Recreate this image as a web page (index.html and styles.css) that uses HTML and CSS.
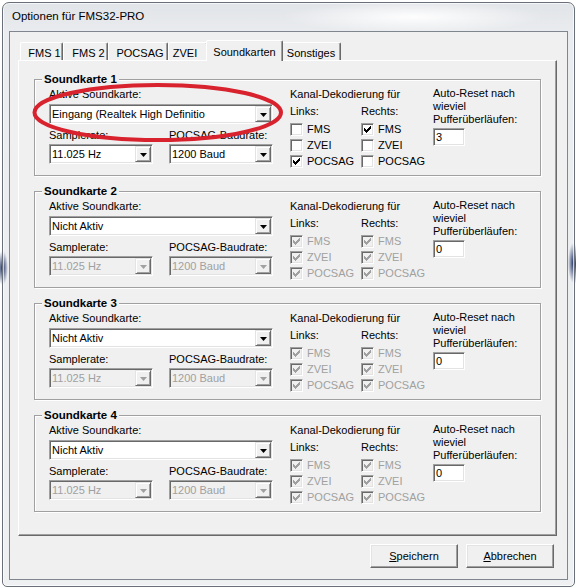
FILE: index.html
```html
<!DOCTYPE html>
<html lang="de">
<head>
<meta charset="utf-8">
<title>Optionen für FMS32-PRO</title>
<link rel="stylesheet" href="styles.css">
</head>
<body>
<div class="window">
  <div class="titlebar">Optionen für FMS32-PRO</div>
  <div class="client">
    <div class="tabs">
      <div class="tab t1">FMS 1</div>
      <div class="tab t2">FMS 2</div>
      <div class="tab t3">POCSAG</div>
      <div class="tab t4">ZVEI</div>
      <div class="tab t5 active">Soundkarten</div>
      <div class="tab t6">Sonstiges</div>
    </div>
    <div class="panel">

      <section class="group">
        <div class="group-title">Soundkarte 1</div>
        <div class="group-body">
          <div class="col">
            <div class="label">Aktive Soundkarte:</div>
            <div class="combo wide"><span class="combo-text">Eingang (Realtek High Definitio</span><span class="combo-btn"><svg viewBox="0 0 7 4"><polygon points="0,0 7,0 3.5,4"/></svg></span></div>
            <div class="pair">
              <div class="field">
                <div class="label">Samplerate:</div>
                <div class="combo"><span class="combo-text">11.025 Hz</span><span class="combo-btn"><svg viewBox="0 0 7 4"><polygon points="0,0 7,0 3.5,4"/></svg></span></div>
              </div>
              <div class="field">
                <div class="label">POCSAG-Baudrate:</div>
                <div class="combo"><span class="combo-text">1200 Baud</span><span class="combo-btn"><svg viewBox="0 0 7 4"><polygon points="0,0 7,0 3.5,4"/></svg></span></div>
              </div>
            </div>
          </div>
          <div class="col">
            <div class="label">Kanal-Dekodierung für</div>
            <div class="checks">
              <div class="label">Links:</div>
              <div class="label">Rechts:</div>
              <div class="check"><span class="cb"></span>FMS</div>
              <div class="check"><span class="cb"><svg viewBox="0 0 7 7"><path d="M0 2H1V3H2V4H3V3H4V2H5V1H6V0H7V3H6V4H5V5H4V6H3V7H2V6H1V5H0Z"/></svg></span>FMS</div>
              <div class="check"><span class="cb"></span>ZVEI</div>
              <div class="check"><span class="cb"></span>ZVEI</div>
              <div class="check"><span class="cb"><svg viewBox="0 0 7 7"><path d="M0 2H1V3H2V4H3V3H4V2H5V1H6V0H7V3H6V4H5V5H4V6H3V7H2V6H1V5H0Z"/></svg></span>POCSAG</div>
              <div class="check"><span class="cb"></span>POCSAG</div>
            </div>
          </div>
          <div class="col">
            <div class="label multi">Auto-Reset nach<br>wieviel<br>Pufferüberläufen:</div>
            <div class="edit">3</div>
          </div>
        </div>
      </section>

      <section class="group">
        <div class="group-title">Soundkarte 2</div>
        <div class="group-body">
          <div class="col">
            <div class="label">Aktive Soundkarte:</div>
            <div class="combo wide"><span class="combo-text">Nicht Aktiv</span><span class="combo-btn"><svg viewBox="0 0 7 4"><polygon points="0,0 7,0 3.5,4"/></svg></span></div>
            <div class="pair">
              <div class="field">
                <div class="label">Samplerate:</div>
                <div class="combo disabled"><span class="combo-text">11.025 Hz</span><span class="combo-btn"><svg viewBox="0 0 7 4"><polygon points="0,0 7,0 3.5,4"/></svg></span></div>
              </div>
              <div class="field">
                <div class="label">POCSAG-Baudrate:</div>
                <div class="combo disabled"><span class="combo-text">1200 Baud</span><span class="combo-btn"><svg viewBox="0 0 7 4"><polygon points="0,0 7,0 3.5,4"/></svg></span></div>
              </div>
            </div>
          </div>
          <div class="col">
            <div class="label">Kanal-Dekodierung für</div>
            <div class="checks">
              <div class="label">Links:</div>
              <div class="label">Rechts:</div>
              <div class="check off"><span class="cb"><svg viewBox="0 0 7 7"><path d="M0 2H1V3H2V4H3V3H4V2H5V1H6V0H7V3H6V4H5V5H4V6H3V7H2V6H1V5H0Z"/></svg></span>FMS</div>
              <div class="check off"><span class="cb"><svg viewBox="0 0 7 7"><path d="M0 2H1V3H2V4H3V3H4V2H5V1H6V0H7V3H6V4H5V5H4V6H3V7H2V6H1V5H0Z"/></svg></span>FMS</div>
              <div class="check off"><span class="cb"><svg viewBox="0 0 7 7"><path d="M0 2H1V3H2V4H3V3H4V2H5V1H6V0H7V3H6V4H5V5H4V6H3V7H2V6H1V5H0Z"/></svg></span>ZVEI</div>
              <div class="check off"><span class="cb"><svg viewBox="0 0 7 7"><path d="M0 2H1V3H2V4H3V3H4V2H5V1H6V0H7V3H6V4H5V5H4V6H3V7H2V6H1V5H0Z"/></svg></span>ZVEI</div>
              <div class="check off"><span class="cb"><svg viewBox="0 0 7 7"><path d="M0 2H1V3H2V4H3V3H4V2H5V1H6V0H7V3H6V4H5V5H4V6H3V7H2V6H1V5H0Z"/></svg></span>POCSAG</div>
              <div class="check off"><span class="cb"><svg viewBox="0 0 7 7"><path d="M0 2H1V3H2V4H3V3H4V2H5V1H6V0H7V3H6V4H5V5H4V6H3V7H2V6H1V5H0Z"/></svg></span>POCSAG</div>
            </div>
          </div>
          <div class="col">
            <div class="label multi">Auto-Reset nach<br>wieviel<br>Pufferüberläufen:</div>
            <div class="edit">0</div>
          </div>
        </div>
      </section>

      <section class="group">
        <div class="group-title">Soundkarte 3</div>
        <div class="group-body">
          <div class="col">
            <div class="label">Aktive Soundkarte:</div>
            <div class="combo wide"><span class="combo-text">Nicht Aktiv</span><span class="combo-btn"><svg viewBox="0 0 7 4"><polygon points="0,0 7,0 3.5,4"/></svg></span></div>
            <div class="pair">
              <div class="field">
                <div class="label">Samplerate:</div>
                <div class="combo disabled"><span class="combo-text">11.025 Hz</span><span class="combo-btn"><svg viewBox="0 0 7 4"><polygon points="0,0 7,0 3.5,4"/></svg></span></div>
              </div>
              <div class="field">
                <div class="label">POCSAG-Baudrate:</div>
                <div class="combo disabled"><span class="combo-text">1200 Baud</span><span class="combo-btn"><svg viewBox="0 0 7 4"><polygon points="0,0 7,0 3.5,4"/></svg></span></div>
              </div>
            </div>
          </div>
          <div class="col">
            <div class="label">Kanal-Dekodierung für</div>
            <div class="checks">
              <div class="label">Links:</div>
              <div class="label">Rechts:</div>
              <div class="check off"><span class="cb"><svg viewBox="0 0 7 7"><path d="M0 2H1V3H2V4H3V3H4V2H5V1H6V0H7V3H6V4H5V5H4V6H3V7H2V6H1V5H0Z"/></svg></span>FMS</div>
              <div class="check off"><span class="cb"><svg viewBox="0 0 7 7"><path d="M0 2H1V3H2V4H3V3H4V2H5V1H6V0H7V3H6V4H5V5H4V6H3V7H2V6H1V5H0Z"/></svg></span>FMS</div>
              <div class="check off"><span class="cb"><svg viewBox="0 0 7 7"><path d="M0 2H1V3H2V4H3V3H4V2H5V1H6V0H7V3H6V4H5V5H4V6H3V7H2V6H1V5H0Z"/></svg></span>ZVEI</div>
              <div class="check off"><span class="cb"><svg viewBox="0 0 7 7"><path d="M0 2H1V3H2V4H3V3H4V2H5V1H6V0H7V3H6V4H5V5H4V6H3V7H2V6H1V5H0Z"/></svg></span>ZVEI</div>
              <div class="check off"><span class="cb"><svg viewBox="0 0 7 7"><path d="M0 2H1V3H2V4H3V3H4V2H5V1H6V0H7V3H6V4H5V5H4V6H3V7H2V6H1V5H0Z"/></svg></span>POCSAG</div>
              <div class="check off"><span class="cb"><svg viewBox="0 0 7 7"><path d="M0 2H1V3H2V4H3V3H4V2H5V1H6V0H7V3H6V4H5V5H4V6H3V7H2V6H1V5H0Z"/></svg></span>POCSAG</div>
            </div>
          </div>
          <div class="col">
            <div class="label multi">Auto-Reset nach<br>wieviel<br>Pufferüberläufen:</div>
            <div class="edit">0</div>
          </div>
        </div>
      </section>

      <section class="group">
        <div class="group-title">Soundkarte 4</div>
        <div class="group-body">
          <div class="col">
            <div class="label">Aktive Soundkarte:</div>
            <div class="combo wide"><span class="combo-text">Nicht Aktiv</span><span class="combo-btn"><svg viewBox="0 0 7 4"><polygon points="0,0 7,0 3.5,4"/></svg></span></div>
            <div class="pair">
              <div class="field">
                <div class="label">Samplerate:</div>
                <div class="combo disabled"><span class="combo-text">11.025 Hz</span><span class="combo-btn"><svg viewBox="0 0 7 4"><polygon points="0,0 7,0 3.5,4"/></svg></span></div>
              </div>
              <div class="field">
                <div class="label">POCSAG-Baudrate:</div>
                <div class="combo disabled"><span class="combo-text">1200 Baud</span><span class="combo-btn"><svg viewBox="0 0 7 4"><polygon points="0,0 7,0 3.5,4"/></svg></span></div>
              </div>
            </div>
          </div>
          <div class="col">
            <div class="label">Kanal-Dekodierung für</div>
            <div class="checks">
              <div class="label">Links:</div>
              <div class="label">Rechts:</div>
              <div class="check off"><span class="cb"><svg viewBox="0 0 7 7"><path d="M0 2H1V3H2V4H3V3H4V2H5V1H6V0H7V3H6V4H5V5H4V6H3V7H2V6H1V5H0Z"/></svg></span>FMS</div>
              <div class="check off"><span class="cb"><svg viewBox="0 0 7 7"><path d="M0 2H1V3H2V4H3V3H4V2H5V1H6V0H7V3H6V4H5V5H4V6H3V7H2V6H1V5H0Z"/></svg></span>FMS</div>
              <div class="check off"><span class="cb"><svg viewBox="0 0 7 7"><path d="M0 2H1V3H2V4H3V3H4V2H5V1H6V0H7V3H6V4H5V5H4V6H3V7H2V6H1V5H0Z"/></svg></span>ZVEI</div>
              <div class="check off"><span class="cb"><svg viewBox="0 0 7 7"><path d="M0 2H1V3H2V4H3V3H4V2H5V1H6V0H7V3H6V4H5V5H4V6H3V7H2V6H1V5H0Z"/></svg></span>ZVEI</div>
              <div class="check off"><span class="cb"><svg viewBox="0 0 7 7"><path d="M0 2H1V3H2V4H3V3H4V2H5V1H6V0H7V3H6V4H5V5H4V6H3V7H2V6H1V5H0Z"/></svg></span>POCSAG</div>
              <div class="check off"><span class="cb"><svg viewBox="0 0 7 7"><path d="M0 2H1V3H2V4H3V3H4V2H5V1H6V0H7V3H6V4H5V5H4V6H3V7H2V6H1V5H0Z"/></svg></span>POCSAG</div>
            </div>
          </div>
          <div class="col">
            <div class="label multi">Auto-Reset nach<br>wieviel<br>Pufferüberläufen:</div>
            <div class="edit">0</div>
          </div>
        </div>
      </section>

    </div>
    <div class="actions">
      <div class="btn"><span><u>S</u>peichern</span></div>
      <div class="btn"><span><u>A</u>bbrechen</span></div>
    </div>
  </div>
</div>
<svg class="markup" width="576" height="588" viewBox="0 0 576 588">
  <ellipse cx="157.75" cy="112.5" rx="123.25" ry="27.5"/>
</svg>
</body>
</html>
```

FILE: styles.css
```css
* {
  box-sizing: border-box;
}

html,
body {
  margin: 0;
}

body {
  position: relative;
  width: 576px;
  height: 588px;
  overflow: hidden;
  background:
    radial-gradient(ellipse 5px 17px at 2px 268px, rgba(30, 48, 100, 0.95), rgba(30, 48, 100, 0)),
    radial-gradient(ellipse 5px 20px at 575px 264px, rgba(30, 48, 100, 0.95), rgba(30, 48, 100, 0)),
    #ffffff;
  font-family: "Liberation Sans", Arial, sans-serif;
  font-size: 11px;
  color: #000;
}

/* ---- window frame ---- */
.window {
  display: flex;
  flex-direction: column;
  width: 573px;
  height: 585px;
  margin: 2px 0 0 2px;
  padding: 0 6px 6px 6px;
  border: 1px solid #6a7079;
  border-radius: 7px 7px 5px 5px;
  background:
    radial-gradient(ellipse 5px 17px at 0px 265px, rgba(30, 48, 100, 0.95), rgba(30, 48, 100, 0)),
    radial-gradient(ellipse 5px 20px at 570px 260px, rgba(30, 48, 100, 0.95), rgba(30, 48, 100, 0)),
    radial-gradient(ellipse 130px 16px at 410px 14px, rgba(255, 255, 255, 0.95), rgba(255, 255, 255, 0)),
    linear-gradient(#e1e4e8, #eaecef 30px, #eef0f2);
  box-shadow: inset 0 0 0 1px rgba(255, 255, 255, 0.7);
}

.titlebar {
  height: 28px;
  padding: 0 0 1px 3px;
  line-height: 27px;
  font-size: 11.5px;
  color: #000;
}

.client {
  width: 559px;
  height: 549px;
  padding: 8px 10px 0 8px;
  border: 1px solid #7f868e;
  background: #f0f0f0;
}

/* ---- tab strip ---- */
.tabs {
  position: relative;
  z-index: 2;
  display: flex;
  align-items: flex-end;
  height: 20px;
  padding-left: 2px;
}

.tab {
  height: 18px;
  padding-top: 3px;
  line-height: 14px;
  text-align: center;
  white-space: nowrap;
  background: #f0f0f0;
  border: 1px solid #ffffff;
  border-bottom: 0;
  border-right-color: #696969;
  border-radius: 2px 2px 0 0;
  box-shadow: inset -1px 0 #a0a0a0;
}

.t1 { width: 43px; padding-left: 6px; }
.t2 { width: 45px; padding-left: 6px; }
.t3 { width: 60px; padding-left: 4px; }
.t4 { width: 40px; padding-right: 6px; }
.t5 { width: 77px; }
.t6 { width: 60px; }

.tab.active {
  position: relative;
  z-index: 3;
  height: 21px;
  margin: 0 -2px -1px;
  padding-top: 4px;
}

/* ---- tab page ---- */
.panel {
  width: 539px;
  height: 476px;
  padding: 18px 0 0 15px;
  border: 1px solid;
  border-color: #ffffff #696969 #696969 #ffffff;
  box-shadow: inset -1px -1px #a0a0a0;
}

.group {
  width: 507px;
  height: 97px;
  margin-bottom: 15px;
  border: 1px solid #a0a0a0;
  box-shadow: inset 1px 1px #ffffff, 1px 1px #ffffff;
}

.group-title {
  width: max-content;
  margin: -8px 0 0 7px;
  padding: 0 2px;
  background: #f0f0f0;
  font-size: 11.5px;
  font-weight: bold;
  line-height: 14px;
}

.group-body {
  display: grid;
  grid-template-columns: 224px 126px 1fr;
  column-gap: 17px;
  padding: 1px 0 0 14px;
}

.label {
  line-height: 14px;
  white-space: nowrap;
}

.label.multi {
  line-height: 13px;
}

/* ---- combo boxes ---- */
.combo {
  display: flex;
  height: 20px;
  border: 1px solid;
  border-color: #a0a0a0 #ffffff #ffffff #a0a0a0;
  box-shadow: inset 1px 1px #696969, inset -1px -1px #e3e3e3;
  background: #ffffff;
}

.col > .combo.wide {
  margin-top: 3px;
}

.combo-text {
  flex: 1;
  padding-left: 2px;
  line-height: 18px;
  white-space: nowrap;
  overflow: hidden;
}

.combo-btn {
  display: flex;
  align-items: center;
  justify-content: center;
  width: 16px;
  height: 16px;
  margin: 1px 1px 0 0;
  border: 1px solid;
  border-color: #e3e3e3 #696969 #696969 #e3e3e3;
  box-shadow: inset 1px 1px #ffffff, inset -1px -1px #a0a0a0;
  background: #f0f0f0;
}

.combo-btn svg {
  display: block;
  width: 7px;
  height: 4px;
  margin-top: 1px;
  fill: #000;
}

.combo.disabled {
  background: #f0f0f0;
  color: #a0a0a0;
}

.combo.disabled .combo-btn svg {
  fill: #a0a0a0;
}

.pair {
  display: grid;
  grid-template-columns: 104px 104px;
  column-gap: 16px;
  margin-top: 4px;
}

.field .combo {
  margin-top: 2px;
}

/* ---- check boxes ---- */
.checks {
  display: grid;
  grid-template-columns: 71px auto;
  grid-template-rows: 19px repeat(3, 16px);
  margin-top: 3px;
}

.check {
  display: flex;
  align-items: flex-start;
  gap: 4px;
  line-height: 13px;
  white-space: nowrap;
}

.cb {
  display: block;
  flex: none;
  width: 13px;
  height: 13px;
  border: 1px solid;
  border-color: #a0a0a0 #ffffff #ffffff #a0a0a0;
  box-shadow: inset 1px 1px #696969, inset -1px -1px #e3e3e3;
  background: #ffffff;
}

.cb svg {
  display: block;
  width: 7px;
  height: 7px;
  margin: 2px;
  fill: #000;
  shape-rendering: crispEdges;
}

.check.off {
  color: #a0a0a0;
}

.check.off .cb {
  background: #f0f0f0;
}

.check.off .cb svg {
  fill: #a0a0a0;
}

/* ---- edit field ---- */
.edit {
  width: 32px;
  height: 18px;
  margin-top: 2px;
  padding-left: 2px;
  line-height: 16px;
  border: 1px solid;
  border-color: #a0a0a0 #ffffff #ffffff #a0a0a0;
  box-shadow: inset 1px 1px #696969, inset -1px -1px #e3e3e3;
  background: #ffffff;
}

/* ---- dialog buttons ---- */
.actions {
  display: flex;
  justify-content: flex-end;
  gap: 8px;
  margin-top: 8px;
  padding-right: 3px;
}

.btn {
  display: flex;
  align-items: center;
  justify-content: center;
  width: 88px;
  height: 24px;
  padding-bottom: 1px;
  border: 1px solid;
  border-color: #ffffff #696969 #696969 #ffffff;
  box-shadow: inset -1px -1px #a0a0a0, inset 1px 1px #e3e3e3;
  background: #f0f0f0;
}

.btn u {
  text-underline-offset: 1px;
}

/* ---- red highlight ring drawn over the dialog ---- */
.markup {
  position: absolute;
  left: 0;
  top: 0;
  pointer-events: none;
}

.markup ellipse {
  fill: none;
  stroke: #d8222d;
  stroke-width: 4;
}
```
